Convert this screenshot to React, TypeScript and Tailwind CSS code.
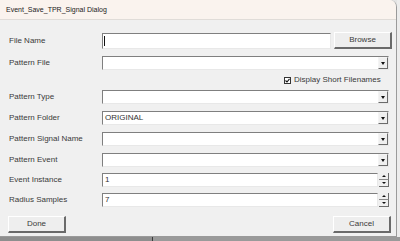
const font = { fontFamily: '"Liberation Sans", Arial, sans-serif' };

function Sunken({ className = "", children }: { className?: string; children?: React.ReactNode }) {
  return (
    <div
      className={`relative bg-white border-t border-l border-t-[#7f7f7f] border-l-[#7f7f7f] border-b border-r border-b-[#e8e8e8] border-r-[#e8e8e8] ${className}`}
    >
      {children}
    </div>
  );
}

function Combo({ value = "" }: { value?: string }) {
  return (
    <Sunken className="flex h-[14px] w-[287px] items-center">
      <div className="flex-1 pl-[2px] text-[8px] leading-none text-[#333]">{value}</div>
      <div className="flex h-[12px] w-[10px] items-center justify-center border-t border-l border-t-[#f4f4f4] border-l-[#f4f4f4] border-b border-r border-b-[#6b6b6b] border-r-[#6b6b6b] bg-[#efefef]">
        <div className="h-0 w-0 border-l-[2.5px] border-r-[2.5px] border-t-[3px] border-l-transparent border-r-transparent border-t-[#111]" />
      </div>
    </Sunken>
  );
}

function Spin({ value }: { value: string }) {
  return (
    <div className="flex h-[14px] items-center">
      <Sunken className="flex h-[14px] w-[276px] items-center">
        <div className="ml-[2px] text-[8px] leading-none text-[#333]">{value}</div>
      </Sunken>
      <div className="ml-[1px] flex h-[14px] w-[10px] flex-col">
        <div className="flex flex-1 items-center justify-center border-b border-r border-b-[#8a8a8a] border-r-[#6b6b6b] bg-[#efefef]">
          <div className="h-0 w-0 border-l-[2px] border-r-[2px] border-b-[2px] border-l-transparent border-r-transparent border-b-[#111]" />
        </div>
        <div className="flex flex-1 items-center justify-center border-b border-r border-b-[#6b6b6b] border-r-[#6b6b6b] bg-[#efefef]">
          <div className="h-0 w-0 border-l-[2px] border-r-[2px] border-t-[2px] border-l-transparent border-r-transparent border-t-[#111]" />
        </div>
      </div>
    </div>
  );
}

function Button({ label }: { label: string }) {
  return (
    <div className="flex h-[17px] w-[58px] items-center justify-center border-t border-l border-t-[#ffffff] border-l-[#ffffff] border-b-2 border-r-2 border-b-[#6a6a6a] border-r-[#6a6a6a] bg-[#eeeeee] text-[8px] leading-none text-[#3a3a3a]">
      {label}
    </div>
  );
}

function Row({ label, mt, children }: { label: string; mt: string; children: React.ReactNode }) {
  return (
    <div className={`flex items-center ${mt}`}>
      <div className="w-[93px] text-[8px] leading-none text-[#3a3a3a]">{label}</div>
      {children}
    </div>
  );
}

export default function App() {
  return (
    <div className="flex h-[241px] w-[400px] flex-col bg-[#e4e4e4]" style={font}>
      <div className="flex">
        <div className="flex h-[237px] w-[397px] flex-col overflow-hidden rounded-tr-[7px] border-r border-b border-[#9a9a9a] bg-[#f0f0f0]">
          <div className="flex h-[20px] items-center border-b border-[#e0dcd8] bg-[#faf3ee] pl-[6px] text-[7px] leading-none text-[#222]">
            Event_Save_TPR_Signal Dialog
          </div>
          <div className="flex flex-col pl-[9px]">
            <div className="mt-[12px] flex items-center">
              <div className="w-[93px] text-[8px] leading-none text-[#3a3a3a]">File Name</div>
              <Sunken className="flex h-[16px] w-[229px] items-center">
                <div className="ml-[1px] h-[10px] w-px bg-[#111]" />
              </Sunken>
              <div className="ml-[3px]">
                <Button label="Browse" />
              </div>
            </div>
            <Row label="Pattern File" mt="mt-[7px]">
              <Combo />
            </Row>
            <div className="mt-[6px] flex items-center pl-[275px]">
              <div className="flex h-[7px] w-[7px] items-center justify-center border border-[#333] bg-white">
                <svg width="5" height="5" viewBox="0 0 5 5">
                  <path d="M0.5 2.5 L2 4 L4.5 0.8" stroke="#111" strokeWidth="1.1" fill="none" />
                </svg>
              </div>
              <div className="ml-[3px] text-[8px] leading-none text-[#3a3a3a]">Display Short Filenames</div>
            </div>
            <Row label="Pattern Type" mt="mt-[6px]">
              <Combo />
            </Row>
            <Row label="Pattern Folder" mt="mt-[7px]">
              <Combo value="ORIGINAL" />
            </Row>
            <Row label="Pattern Signal Name" mt="mt-[7px]">
              <Combo />
            </Row>
            <Row label="Pattern Event" mt="mt-[7px]">
              <Combo />
            </Row>
            <Row label="Event Instance" mt="mt-[6px]">
              <Spin value="1" />
            </Row>
            <Row label="Radius Samples" mt="mt-[6px]">
              <Spin value="7" />
            </Row>
            <div className="mt-[9px] flex items-center justify-between pr-[5px]">
              <div className="-ml-[1px]">
                <Button label="Done" />
              </div>
              <Button label="Cancel" />
            </div>
          </div>
        </div>
        <div className="flex-1 bg-[#ececec]" />
      </div>
      <div className="flex flex-1">
        <div className="w-[152px] bg-[#8e8e8e]" />
        <div className="w-px bg-[#3a3a3a]" />
        <div className="flex-1 bg-[#9a9a9a]" />
      </div>
    </div>
  );
}
